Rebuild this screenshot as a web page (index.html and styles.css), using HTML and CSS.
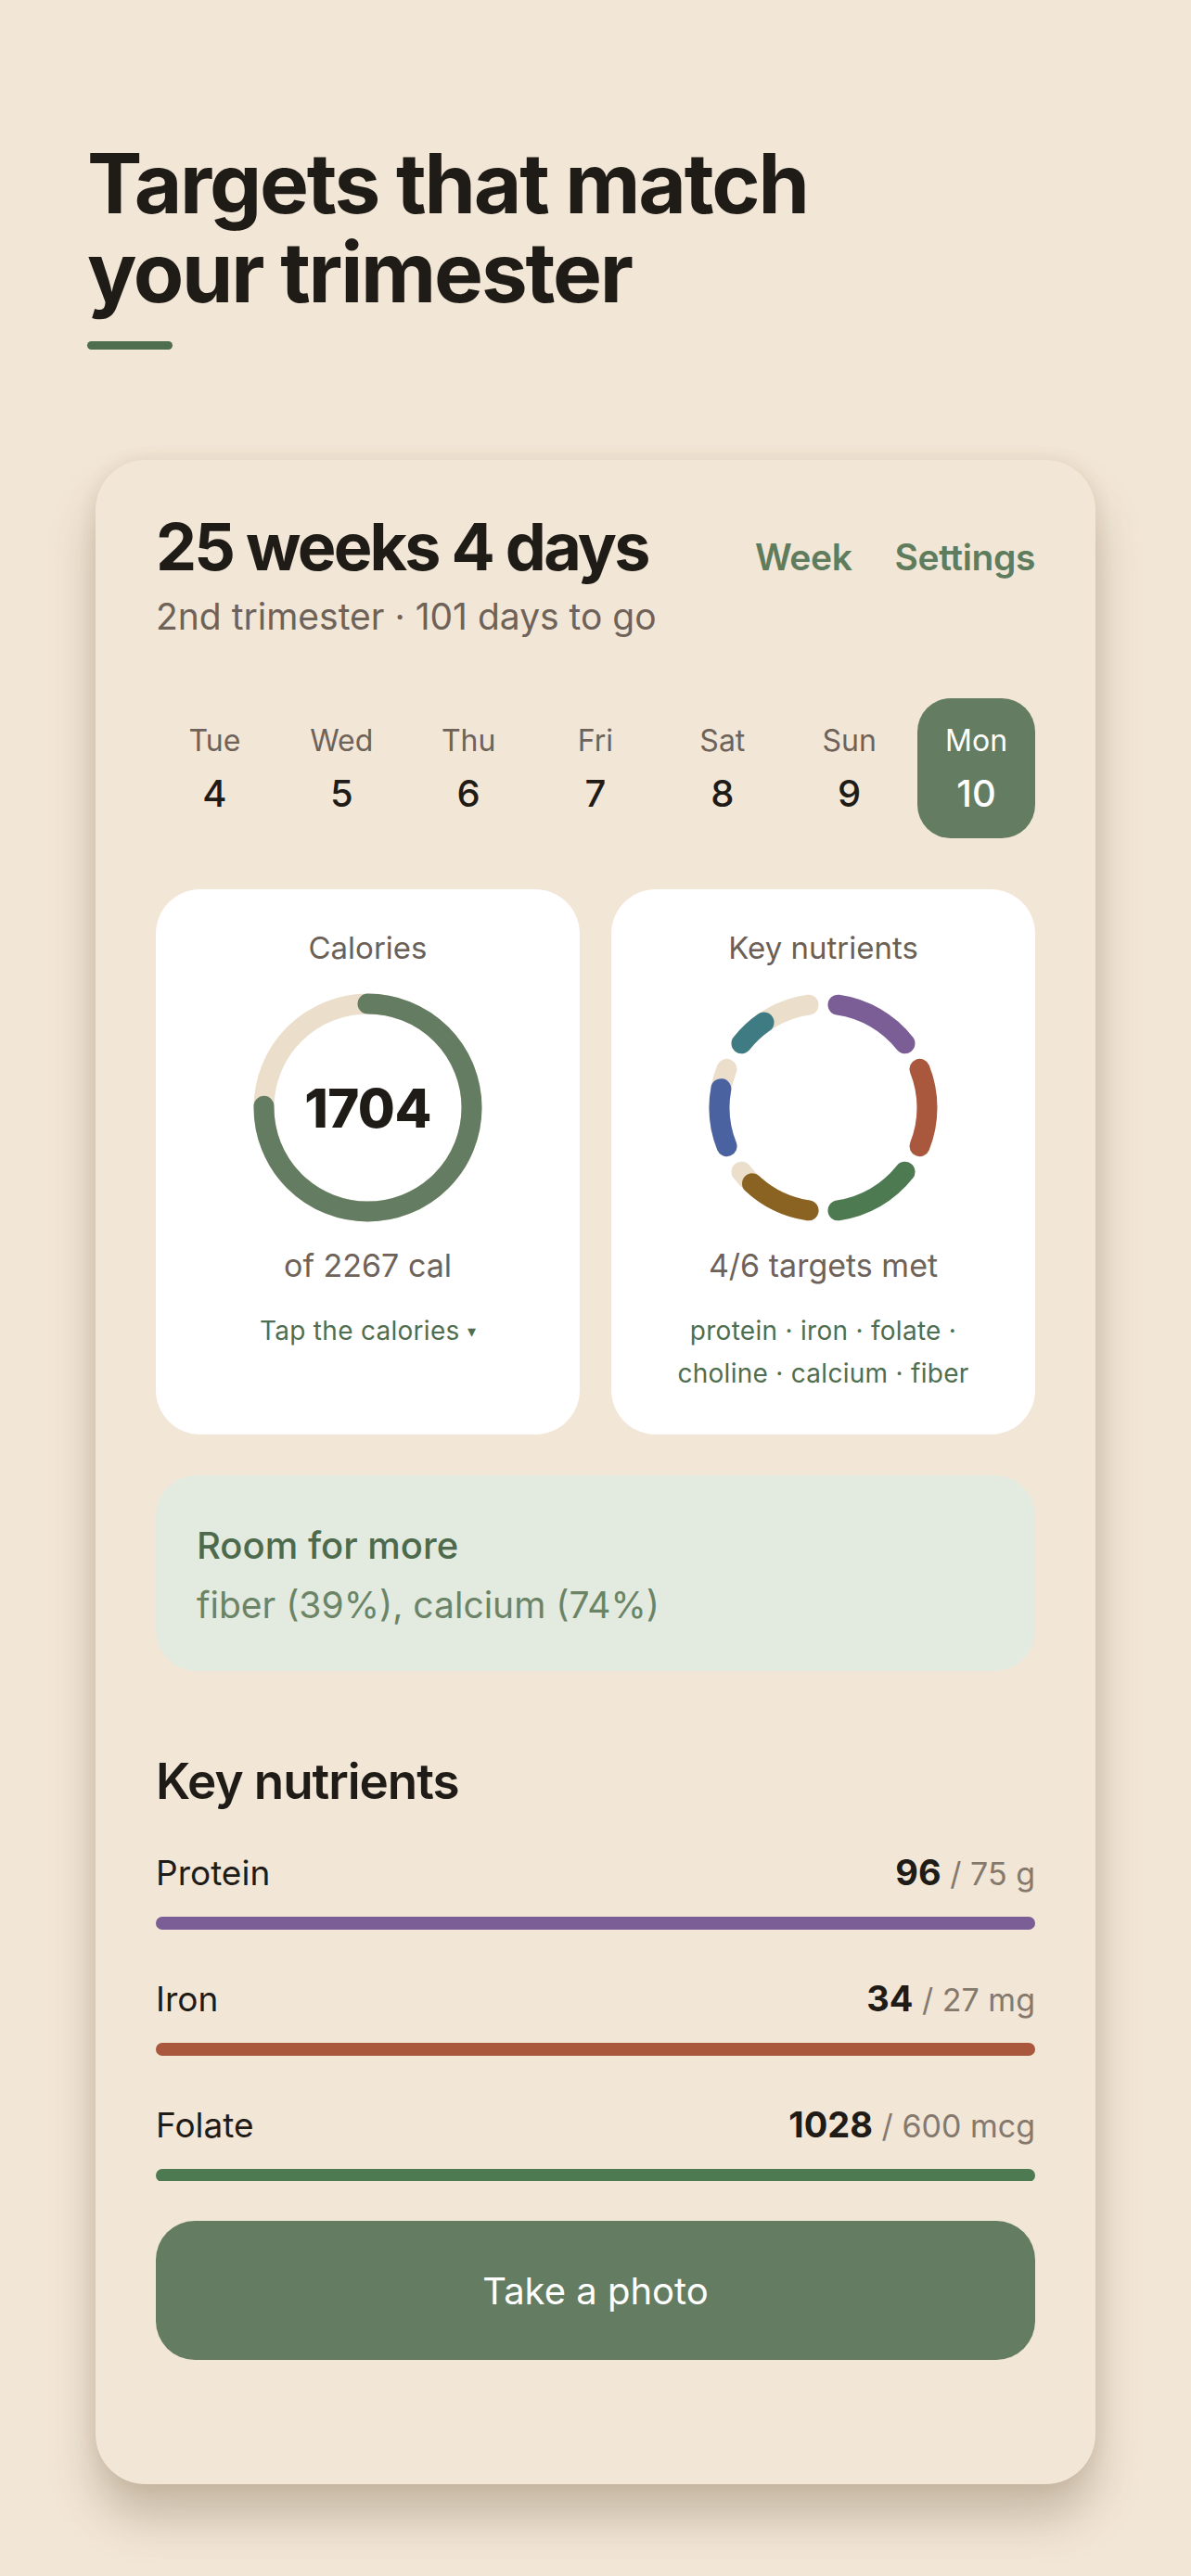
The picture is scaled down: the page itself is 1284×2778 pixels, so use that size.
FILE: index.html
```html
<!DOCTYPE html>
<html lang="en">
<head>
    <meta charset="UTF-8">
    <meta name="viewport" content="width=device-width, initial-scale=1.0">
    <title>Trimester targets</title>
    <link rel="stylesheet" href="styles.css">
</head>
<body>
    <main class="page">
        <h1 class="hero">Targets that match<br>your trimester</h1>
        <div class="hero-rule"></div>

        <section class="card">
            <div class="title-row">
                <h2 class="weeks">25 weeks 4 days</h2>
                <nav class="head-links">
                    <a href="#">Week</a>
                    <a href="#">Settings</a>
                </nav>
            </div>
            <p class="sub">2nd trimester · 101 days to go</p>

            <div class="days">
                <div class="day"><span class="day-name">Tue</span><span class="day-num">4</span></div>
                <div class="day"><span class="day-name">Wed</span><span class="day-num">5</span></div>
                <div class="day"><span class="day-name">Thu</span><span class="day-num">6</span></div>
                <div class="day"><span class="day-name">Fri</span><span class="day-num">7</span></div>
                <div class="day"><span class="day-name">Sat</span><span class="day-num">8</span></div>
                <div class="day"><span class="day-name">Sun</span><span class="day-num">9</span></div>
                <div class="day active"><span class="day-name">Mon</span><span class="day-num">10</span></div>
            </div>

            <div class="tiles">
                <div class="tile">
                    <div class="tile-label">Calories</div>
                    <div class="ring-wrap">
                        <svg class="ring" viewBox="0 0 247 247" width="247" height="247">
                            <circle cx="123.5" cy="123.5" r="112" fill="none" stroke="#ebdfcb" stroke-width="22"/>
                            <circle cx="123.5" cy="123.5" r="112" fill="none" stroke="#647d62" stroke-width="22"
                                stroke-linecap="round" stroke-dasharray="529 704" transform="rotate(-90 123.5 123.5)"/>
                        </svg>
                        <span class="ring-num">1704</span>
                    </div>
                    <div class="tile-value">of 2267 cal</div>
                    <div class="tile-note">Tap the calories <span class="caret">▾</span></div>
                </div>

                <div class="tile">
                    <div class="tile-label">Key nutrients</div>
                    <div class="ring-wrap">
                        <svg class="ring" viewBox="0 0 247 247" width="247" height="247" fill="none" stroke-width="22" stroke-linecap="round">
                            <!-- tracks -->
                            <path d="M107.53 234.36 A112 112 0 0 1 35.48 192.76" stroke="#ebdfcb"/>
                            <path d="M19.51 165.10 A112 112 0 0 1 19.51 81.90" stroke="#ebdfcb"/>
                            <path d="M35.48 54.24 A112 112 0 0 1 107.53 12.64" stroke="#ebdfcb"/>
                            <!-- values -->
                            <path d="M139.47 12.64 A112 112 0 0 1 211.52 54.24" stroke="#7b5e96"/>
                            <path d="M227.49 81.90 A112 112 0 0 1 227.49 165.10" stroke="#a9573d"/>
                            <path d="M211.52 192.76 A112 112 0 0 1 139.47 234.36" stroke="#4e7a52"/>
                            <path d="M107.53 234.36 A112 112 0 0 1 46.99 205.29" stroke="#8a6221"/>
                            <path d="M19.51 165.10 A112 112 0 0 1 13.36 103.17" stroke="#4a63a0"/>
                            <path d="M35.48 54.24 A112 112 0 0 1 59.58 31.54" stroke="#3f7b83"/>
                        </svg>
                    </div>
                    <div class="tile-value">4/6 targets met</div>
                    <div class="tile-note">protein · iron · folate ·<br>choline · calcium · fiber</div>
                </div>
            </div>

            <div class="room">
                <div class="room-title">Room for more</div>
                <div class="room-text">fiber (39%), calcium (74%)</div>
            </div>

            <div class="scroll">
                <h3 class="section-title">Key nutrients</h3>
                <div class="n-list">
                    <div class="n-row">
                        <div class="n-head"><span class="n-name">Protein</span><span class="n-val"><b>96</b> / 75 g</span></div>
                        <div class="bar"><div class="bar-fill protein" style="width: 100%"></div></div>
                    </div>
                    <div class="n-row">
                        <div class="n-head"><span class="n-name">Iron</span><span class="n-val"><b>34</b> / 27 mg</span></div>
                        <div class="bar"><div class="bar-fill iron" style="width: 100%"></div></div>
                    </div>
                    <div class="n-row">
                        <div class="n-head"><span class="n-name">Folate</span><span class="n-val"><b>1028</b> / 600 mcg</span></div>
                        <div class="bar"><div class="bar-fill folate" style="width: 100%"></div></div>
                    </div>
                </div>
            </div>

            <button class="cta">Take a photo</button>
        </section>
    </main>
</body>
</html>
```

FILE: styles.css
```css
body {
    margin: 0;
    background: #f2e6d6;
    font-family: Inter, "Noto Sans", sans-serif;
    color: #1f1b16;
}
.page {
    width: 1284px;
    padding: 150px 0 98px;
}
.hero {
    margin: 0 0 0 94px;
    font-weight: 700;
    font-size: 89px;
    line-height: 96px;
    letter-spacing: -0.025em;
    color: #1f1b16;
}
.hero-rule {
    margin: 26px 0 0 94px;
    width: 92px;
    height: 9px;
    border-radius: 5px;
    background: #4f6e4f;
}
.card {
    margin: 119px 103px 0;
    padding: 55px 65px 134px;
    background: #f2e6d7;
    border-radius: 54px;
    box-shadow: 0 0 18px rgba(120, 95, 60, 0.12), 0 36px 50px rgba(90, 70, 40, 0.28);
}
.title-row {
    display: flex;
    justify-content: space-between;
    align-items: baseline;
}
.weeks {
    margin: 0;
    font-weight: 700;
    font-size: 70px;
    line-height: 77px;
    letter-spacing: -0.04em;
}
.head-links {
    display: flex;
    gap: 46px;
}
.head-links a {
    color: #5f7d5c;
    text-decoration: none;
    font-size: 39px;
    font-weight: 600;
    letter-spacing: -0.01em;
}
.sub {
    margin: 15px 0 0;
    font-size: 39px;
    line-height: 43px;
    color: #6e6259;
}
.days {
    display: grid;
    grid-template-columns: repeat(7, 1fr);
    gap: 10px;
    margin-top: 67px;
}
.day {
    display: flex;
    flex-direction: column;
    align-items: center;
    gap: 13px;
    padding: 26px 0 24px;
    border-radius: 36px;
}
.day-name {
    font-size: 32px;
    line-height: 40px;
    color: #6e6259;
}
.day-num {
    font-size: 40px;
    line-height: 48px;
    font-weight: 500;
}
.day.active {
    background: #647d62;
}
.day.active .day-name,
.day.active .day-num {
    color: #fff;
}
.tiles {
    display: grid;
    grid-template-columns: 1fr 1fr;
    gap: 34px;
    margin-top: 55px;
}
.tile {
    height: 588px;
    box-sizing: border-box;
    padding-top: 45px;
    background: #fff;
    border-radius: 48px;
    display: flex;
    flex-direction: column;
    align-items: center;
}
.tile-label {
    font-size: 33px;
    line-height: 36px;
    color: #6b5f56;
}
.ring-wrap {
    position: relative;
    width: 247px;
    height: 247px;
    margin-top: 31px;
}
.ring {
    display: block;
}
.ring-num {
    position: absolute;
    left: 0;
    right: 0;
    top: 50%;
    transform: translateY(-50%);
    text-align: center;
    font-weight: 800;
    font-size: 58px;
    letter-spacing: -0.01em;
}
.tile-value {
    margin-top: 27px;
    font-size: 34px;
    line-height: 40px;
    color: #6e6259;
}
.tile-note {
    margin-top: 27px;
    font-size: 28px;
    line-height: 46px;
    color: #4f6e50;
    text-align: center;
    letter-spacing: 0.01em;
}
.caret {
    font-size: 18px;
    vertical-align: 3px;
}
.room {
    margin-top: 44px;
    padding: 52px 44px 48px;
    background: #e3eadf;
    border-radius: 44px;
}
.room-title {
    font-size: 40px;
    line-height: 48px;
    font-weight: 500;
    color: #4d6b4c;
}
.room-text {
    margin-top: 17px;
    font-size: 39px;
    line-height: 46px;
    color: #6b8466;
}
.scroll {
    margin-top: 82px;
    padding-top: 8px;
    height: 460px;
    overflow: hidden;
}
.section-title {
    margin: 0;
    font-weight: 600;
    font-size: 53px;
    line-height: 58px;
    letter-spacing: -0.02em;
}
.n-list {
    display: flex;
    flex-direction: column;
    gap: 51px;
    margin-top: 46px;
}
.n-row {
    display: flex;
    flex-direction: column;
    gap: 24px;
}
.n-head {
    display: flex;
    justify-content: space-between;
    align-items: baseline;
}
.n-name {
    font-size: 37px;
    line-height: 46px;
}
.n-val {
    font-size: 34px;
    color: #85796e;
}
.n-val b {
    font-size: 38px;
    font-weight: 700;
    color: #1f1b16;
}
.bar {
    height: 14px;
    border-radius: 7px;
    background: #e6d9c6;
}
.bar-fill {
    height: 100%;
    border-radius: 7px;
}
.protein { background: #7b5e96; }
.iron { background: #a9573d; }
.folate { background: #4e7a52; }
.cta {
    display: block;
    width: 100%;
    height: 150px;
    margin-top: 43px;
    border: none;
    border-radius: 42px;
    background: #647d62;
    color: #fff;
    font-family: Inter, sans-serif;
    font-size: 40px;
    cursor: pointer;
}
```
